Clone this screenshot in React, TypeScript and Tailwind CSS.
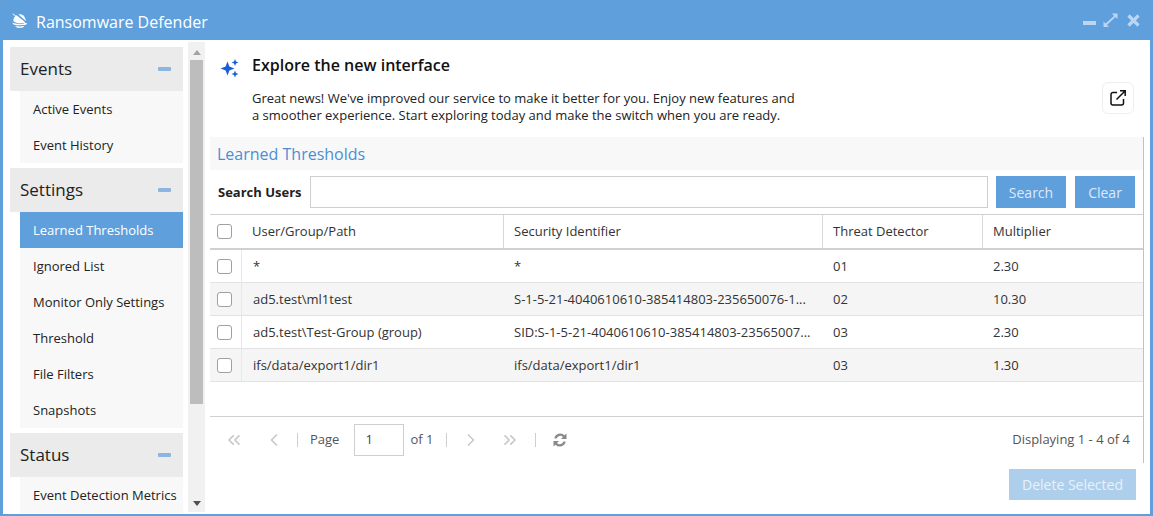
import React from "react";
import { ChevronLeft, ChevronRight, ChevronsLeft, ChevronsRight } from "lucide-react";

const cols = "grid grid-cols-[32px_262px_319px_160px_1fr]";

function Section({ title, items, active }: { title: string; items: string[]; active?: string }) {
  return (
    <div className="mb-[5px]">
      <div className="h-[44px] bg-[#ebebeb] flex items-center justify-between pl-[10px] pr-[12px]">
        <span className="text-[17px] text-[#222]">{title}</span>
        <span className="w-[13px] h-[4px] bg-[#8db5e2] rounded-[1px]" />
      </div>
      <div className="ml-[10px] bg-[#f8f8f8]">
        {items.map((t) => (
          <div
            key={t}
            className={
              "h-[36px] flex items-center pl-[13px] pt-[2px] text-[13px] whitespace-nowrap " +
              (t === active ? "bg-[#5f9fdc] text-white" : "text-[#222]")
            }
          >
            {t}
          </div>
        ))}
      </div>
    </div>
  );
}

function Check() {
  return <span className="block w-[15px] h-[15px] border-[1.5px] border-[#a0a0a0] rounded-[3px] bg-white" />;
}

const rows = [
  ["*", "*", "01", "2.30"],
  ["ad5.test\\ml1test", "S-1-5-21-4040610610-385414803-235650076-1...", "02", "10.30"],
  ["ad5.test\\Test-Group (group)", "SID:S-1-5-21-4040610610-385414803-23565007...", "03", "2.30"],
  ["ifs/data/export1/dir1", "ifs/data/export1/dir1", "03", "1.30"],
];

export default function App() {
  return (
    <div
      className="w-[1153px] h-[516px] overflow-hidden bg-white border-x-[3px] border-b-[2px] border-t border-[#5f9fdc] flex flex-col text-[13px] text-[#333]"
      style={{ fontFamily: '"Open Sans", sans-serif' }}
    >
      <div className="h-[39px] shrink-0 bg-[#5f9fdc] flex items-center pl-[9px] pr-[10px] text-white">
        <svg width="16" height="16" viewBox="0 0 16 16" fill="white" className="mr-[8px] mt-[1px]">
          <path d="M1 .5L14.500 11l-.8.7L.4 1.100z" />
          <path d="M1.500 8.500C1 5.800 2.500 3.200 4.500 2.300l8.200 6.400.8.700-.6.200-2.500.3-3.400.5-2.600-.6z" />
          <path d="M6.500 1.500c3-.8 6.300 1.200 7 4.800l.3 1.800z" />
          <path d="M.3 9.800l4.500.9 2.400.5 3-.5 5-.7c-.5 1-1.400 1.700-2.600 1.900-1.100.2-2.200 0-3.200.2-1 .3-2 .5-3.200.2-1-.2-2-.1-3.100-.3C1.700 11.700.7 11 .3 9.800z" />
          <path d="M3 13c1.300.4 2.400.1 3.500.3 1.100.3 2.200.2 3.200-.1 1-.2 1.800 0 2.800-.1-1 1.400-2.400 1.700-3.700 1.700-1 0-1.800.200-2.800 0C4.800 14.600 3.700 14.200 3 13z" />
        </svg>
        <span className="text-[16px] leading-none mt-[2px]">Ransomware Defender</span>
        <div className="ml-auto flex items-center gap-[7px]">
          <span className="w-[13px] h-[4px] bg-[#bcd5f0] mt-[4px]" />
          <svg width="15" height="15" viewBox="0 0 15 15" fill="#bcd5f0">
            <path d="M9 0.500h5.500V6l-2-2L4 12l2 2H0.500V8.500l2 2L11 3z" />
          </svg>
          <svg width="13" height="13" viewBox="0 0 13 13" stroke="#bcd5f0" strokeWidth="3.2" className="ml-[2px]">
            <path d="M1.500 1.500l10 10M11.500 1.500l-10 10" />
          </svg>
        </div>
      </div>

      <div className="flex-1 min-h-0 flex">
        <div className="w-[185px] shrink-0 overflow-hidden pt-[7px] pl-[7px] pr-[5px]">
          <Section title="Events" items={["Active Events", "Event History"]} />
          <Section
            title="Settings"
            active="Learned Thresholds"
            items={["Learned Thresholds", "Ignored List", "Monitor Only Settings", "Threshold", "File Filters", "Snapshots"]}
          />
          <Section title="Status" items={["Event Detection Metrics"]} />
        </div>

        <div className="w-[17px] shrink-0 bg-[#f1f1f1] flex flex-col items-center pt-[8px] mt-[2px] mb-[2px]">
          <span className="w-0 h-0 border-x-[4px] border-x-transparent border-b-[5px] border-b-[#a3a3a3]" />
          <span className="w-[13px] h-[344px] mt-[5px] bg-[#bdbdbd]" />
          <span className="mt-auto mb-[6px] w-0 h-0 border-x-[4px] border-x-transparent border-t-[5px] border-t-[#505050]" />
        </div>

        <div className="flex-1 min-w-0 flex flex-col">
          <div className="h-[97px] shrink-0 relative pl-[47px] pt-[14px] bg-white">
            <svg width="20" height="20" viewBox="0 0 20 20" fill="#1a5fd8" className="absolute left-[15px] top-[18px]">
              <path d="M7.500 3.500l1.900 5.100 5.100 1.900-5.100 1.900-1.900 5.100-1.900-5.100-5.100-1.900 5.100-1.900z" />
              <path d="M15 1l1 2.500 2.500 1-2.500 1-1 2.500-1-2.500-2.500-1 2.500-1z" />
              <path d="M15 12.500l1 2.500 2.500 1-2.500 1-1 2.500-1-2.500-2.500-1 2.500-1z" />
            </svg>
            <div className="text-[16px] leading-[22px] font-semibold text-[#111]">Explore the new interface</div>
            <div className="mt-[14px] text-[13px] leading-[17px] text-[#222] w-[560px]">
              Great news! We've improved our service to make it better for you. Enjoy new features and
              <br />
              a smoother experience. Start exploring today and make the switch when you are ready.
            </div>
            <div className="absolute left-[897px] top-[42px] w-[32px] h-[32px] rounded-[6px] border border-[#eeeeee] bg-white flex items-center justify-center">
              <svg width="18" height="18" viewBox="0 0 18 18" fill="none" stroke="#111" strokeWidth="1.500">
                <path d="M8 3.500H4a2 2 0 0 0-2 2V14a2 2 0 0 0 2 2h8.500a2 2 0 0 0 2-2v-4" />
                <path d="M7.500 10.500L16 2M11 1.800h5.200V7" />
              </svg>
            </div>
          </div>

          <div className="ml-[5px] mr-[6px] shrink-0 flex flex-col border-r border-r-[#a9c6ea]">
            <div className="h-[33px] shrink-0 bg-[#f8f8f8] flex items-center pl-[7px] text-[16px] text-[#4a8fd6]">
              Learned Thresholds
            </div>
            <div className="h-[45px] shrink-0 flex items-center pl-[8px] pr-[8px] border-b border-[#d0d0d0]">
              <span className="font-bold text-[13px] text-[#222] w-[92px] pt-[1px]">Search Users</span>
              <span className="block w-[678px] h-[32px] border border-[#cfcfcf] bg-white" />
              <span className="ml-[8px] w-[70px] h-[32px] bg-[#5f9fdc] text-[#dfeaf7] text-[14px] flex items-center justify-center">
                Search
              </span>
              <span className="ml-[9px] w-[60px] h-[32px] bg-[#5f9fdc] text-[#dfeaf7] text-[14px] flex items-center justify-center">
                Clear
              </span>
            </div>
            <div className={cols + " h-[35px] shrink-0 border-b-[2px] border-[#d0d0d0] items-stretch"}>
              <div className="flex items-center pl-[7px]">
                <Check />
              </div>
              <div className="flex items-center pl-[10px] border-r border-[#d8d8d8]">User/Group/Path</div>
              <div className="flex items-center pl-[10px] border-r border-[#d8d8d8]">Security Identifier</div>
              <div className="flex items-center pl-[10px] border-r border-[#d8d8d8]">Threat Detector</div>
              <div className="flex items-center pl-[10px]">Multiplier</div>
            </div>
            {rows.map((r, i) => (
              <div
                key={i}
                className={
                  cols +
                  " h-[33px] shrink-0 border-b border-[#e2e2e2] items-stretch whitespace-nowrap " +
                  (i % 2 === 1 ? "bg-[#f5f5f5]" : "bg-white")
                }
              >
                <div className="flex items-center pl-[7px] border-r border-[#e8e8e8]">
                  <Check />
                </div>
                <div className="flex items-center pl-[11px] pt-[2px]">{r[0]}</div>
                <div className="flex items-center pl-[10px] pt-[2px]">{r[1]}</div>
                <div className="flex items-center pl-[10px] pt-[2px]">{r[2]}</div>
                <div className="flex items-center pl-[10px] pt-[2px]">{r[3]}</div>
              </div>
            ))}
            <div className="h-[35px] shrink-0 border-b border-[#d0d0d0]" />
            <div className="h-[46px] shrink-0 flex items-center pl-[14px] pr-[13px] text-[#555]">
              <ChevronsLeft size={20} strokeWidth={2} className="text-[#c8c8c8]" />
              <ChevronLeft size={20} strokeWidth={2} className="text-[#c8c8c8] ml-[20px]" />
              <span className="w-px h-[14px] bg-[#cfcfcf] ml-[13px]" />
              <span className="ml-[12px]">Page</span>
              <span className="ml-[15px] w-[50px] h-[32px] border border-[#cfcfcf] flex items-center pl-[10px] text-[#444]">1</span>
              <span className="ml-[6px]">of 1</span>
              <span className="w-px h-[14px] bg-[#cfcfcf] ml-[13px]" />
              <ChevronRight size={20} strokeWidth={2} className="text-[#c8c8c8] ml-[14px]" />
              <ChevronsRight size={20} strokeWidth={2} className="text-[#c8c8c8] ml-[19px]" />
              <span className="w-px h-[14px] bg-[#cfcfcf] ml-[15px]" />
              <svg width="16" height="16" viewBox="0 0 16 16" fill="#8a8a8a" className="ml-[16px]">
                <path d="M2.300 6.500A6 6 0 0 1 12.500 3.300L14.500 1.500V7H9l2-2A3.800 3.800 0 0 0 4.600 6.500z" />
                <path d="M13.700 9.500A6 6 0 0 1 3.500 12.700L1.500 14.500V9H7l-2 2a3.800 3.800 0 0 0 6.400-1.500z" />
              </svg>
              <span className="ml-auto">Displaying 1 - 4 of 4</span>
            </div>
          </div>
          <div className="flex justify-end pr-[14px] pt-[6px]">
            <span className="w-[127px] h-[31px] bg-[#aecfec] text-[#e8f1fa] text-[14px] flex items-center justify-center">
              Delete Selected
            </span>
          </div>
        </div>
      </div>
    </div>
  );
}
